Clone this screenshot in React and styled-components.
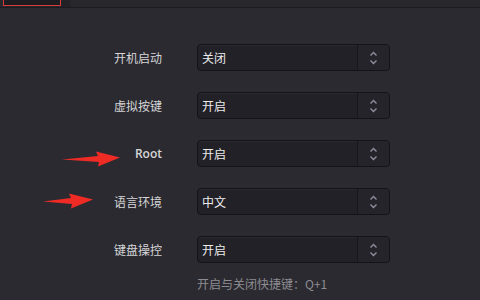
import React from "react";
import styled, { createGlobalStyle } from "styled-components";

const GlobalStyle = createGlobalStyle`
  html, body {
    margin: 0;
    padding: 0;
    background: #2b2a30;
    width: 480px;
    height: 300px;
    overflow: hidden;
    font-family: "Noto Sans CJK SC", "Liberation Sans", sans-serif;
  }
`;

const Page = styled.div`
  position: relative;
  width: 480px;
  height: 300px;
  background: #2b2a30;
`;

const TabBar = styled.div`
  display: flex;
  height: 7px;
  background: #28272c;
  border-bottom: 1px solid #1c1b20;
`;

const Tab = styled.div`
  width: ${(p) => p.width}px;
  margin-left: ${(p) => p.offset || 0}px;
  background: ${(p) => (p.active ? "#1d1c21" : "#222126")};
  border: ${(p) => (p.active ? "1px solid #d8393a" : "none")};
  border-top: none;
  box-sizing: border-box;
  height: ${(p) => (p.active ? 6 : 7)}px;
`;

const Form = styled.div`
  display: grid;
  grid-template-columns: 162px 193px;
  grid-auto-rows: 27px;
  column-gap: 35px;
  row-gap: 21px;
  padding-top: 36px;
`;

const Label = styled.div`
  display: flex;
  align-items: center;
  justify-content: flex-end;
  font-size: 12px;
  color: #d6d6d8;
  font-weight: ${(p) => (p.latin ? 600 : 400)};
  font-family: ${(p) =>
    p.latin ? '"Open Sans", sans-serif' : '"Noto Sans CJK SC", sans-serif'};
`;

const Select = styled.div`
  display: flex;
  box-sizing: border-box;
  border: 1px solid #141318;
  border-radius: 4px;
  background: #222127;
  box-shadow: inset 0 1px 0 rgba(255, 255, 255, 0.04);
  overflow: hidden;
`;

const Value = styled.div`
  flex: 1;
  display: flex;
  align-items: center;
  padding-left: 4px;
  font-size: 12px;
  color: #ececee;
`;

const Stepper = styled.div`
  width: 31px;
  border-left: 1px solid #18171c;
  background: #25242a;
  display: flex;
  align-items: center;
  justify-content: center;
`;

const Hint = styled.div`
  grid-column: 2;
  font-size: 12px;
  color: #8d8c92;
  margin-top: -9px;
  font-family: "Noto Sans CJK SC", "Liberation Sans", sans-serif;
`;

const Arrow = styled.svg`
  position: absolute;
  left: ${(p) => p.x}px;
  top: ${(p) => p.y}px;
`;

const rows = [
  { label: "开机启动", value: "关闭" },
  { label: "虚拟按键", value: "开启" },
  { label: "Root", value: "开启", latin: true },
  { label: "语言环境", value: "中文" },
  { label: "键盘操控", value: "开启" },
];

const Chevrons = () => (
  <svg width="9" height="16" viewBox="0 0 9 16">
    <path d="M1.5 5.5 L4.5 2.5 L7.5 5.5" fill="none" stroke="#8f8e9c" strokeWidth="1.4" />
    <path d="M1.5 10.5 L4.5 13.5 L7.5 10.5" fill="none" stroke="#8f8e9c" strokeWidth="1.4" />
  </svg>
);

const RedArrow = ({ x, y, w }) => (
  <Arrow x={x} y={y} width={w} height="16" viewBox={`0 0 ${w} 16`}>
    <path
      d={`M0 8.5 L${w - 22} 5 L${w - 24} 0.5 L${w} 6.5 L${w - 22} 15.5 L${w - 21} 11 Z`}
      fill="#ef2b26"
    />
  </Arrow>
);

export default function App() {
  return (
    <Page>
      <GlobalStyle />
      <TabBar>
        <Tab width={58} offset={3} active />
        <Tab width={9} />
      </TabBar>
      <Form>
        {rows.map((r) => (
          <React.Fragment key={r.label}>
            <Label latin={r.latin}>{r.label}</Label>
            <Select>
              <Value>{r.value}</Value>
              <Stepper>
                <Chevrons />
              </Stepper>
            </Select>
          </React.Fragment>
        ))}
        <Hint>开启与关闭快捷键：Q+1</Hint>
      </Form>
      <RedArrow x={62} y={151} w={58} />
      <RedArrow x={43} y={193} w={50} />
    </Page>
  );
}
